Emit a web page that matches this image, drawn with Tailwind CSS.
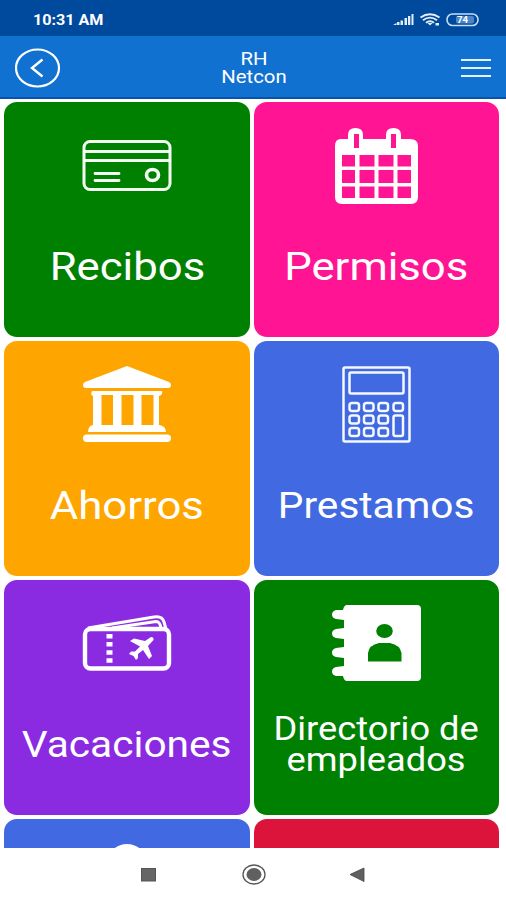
<!DOCTYPE html>
<html lang="es">
<head>
<meta charset="utf-8">
<meta name="viewport" content="width=device-width">
<title>RH Netcon</title>
<script src="https://cdn.jsdelivr.net/npm/@tailwindcss/browser@4"></script>
</head>
<body class="w-[506px] h-[900px] overflow-hidden bg-white font-['Roboto',sans-serif] text-white flex flex-col">
<!-- Status bar -->
<div class="h-9 shrink-0 bg-[#004a9e] flex items-center justify-between pl-[33px] pr-[26px] pt-1">
  <span class="text-[14px] leading-4 font-bold origin-left scale-x-[1.15] whitespace-nowrap">10:31 AM</span>
  <svg class="w-[88px] h-4 shrink-0" viewBox="0 0 88 16" fill="none">
    <g fill="#e3edf8"><path d="M1 13l3.500-2v2zM5 10h2.500v3H5zM8.500 8.500h2.500V13H8.500zM12.500 6h2.500v7h-2.500zM16 4h2.300v9H16zM19.500 2h2v11h-2z"/></g>
    <g stroke="#e3edf8" stroke-width="1.900"><path d="M28.500 5.500Q38-1 47.500 5.500M31 8.200Q38 3 45 8.200M34 10.800Q38 7.500 42 10.800"/></g>
    <path d="M35.500 11L38 13.500L40.500 11zM43.500 11h3.500v2.500h-3.500z" fill="#e3edf8"/>
    <rect x="55" y="2" width="31" height="11.500" rx="5.500" stroke="#c6dcf5" stroke-width="1.600"/>
    <rect x="64" y="4" width="18" height="7.500" rx="2" fill="#4c86c8"/>
    <text x="65" y="11" font-size="9" font-weight="700" fill="#fff" textLength="11" lengthAdjust="spacingAndGlyphs">74</text>
  </svg>
</div>
<!-- App header -->
<header class="h-[63px] shrink-0 bg-[#1171d0] border-b-2 border-[#0754ae] grid grid-cols-[1fr_auto_1fr] items-center pl-[15px] pr-[14px]">
  <svg class="w-[46px] h-10 mt-0.5" viewBox="0 0 46 40" fill="none" stroke="#fff">
    <ellipse cx="22.500" cy="20" rx="21.500" ry="18.500" stroke-width="2.200"/>
    <path d="M27.500 11.500L17 20L27.500 28.500" stroke-width="2.400"/>
  </svg>
  <div class="text-center text-[18px] leading-[18px] scale-x-[1.13] pt-0.5">RH<br>Netcon</div>
  <svg class="w-[32px] h-6 justify-self-end mt-0.5" viewBox="0 0 32 24" stroke="#e8f2fc" stroke-width="2.200"><path d="M1 4h30M1 12h30M1 20h30"/></svg>
</header>
<!-- Menu tiles -->
<main class="h-[749px] shrink-0 overflow-hidden grid grid-cols-[246px_245px] auto-rows-[235px] gap-x-1 gap-y-1 pl-1 pt-[3px]">
  <section class="rounded-[13px] bg-[#008000] flex flex-col items-center">
    <svg class="w-[92px] h-[80px] mt-6 mr-0.5 shrink-0" viewBox="0 0 92 80" fill="none" stroke="#f4fff4" stroke-width="3">
      <rect x="4" y="15.500" width="86" height="48" rx="6"/>
      <path d="M4 25.500h86M4 34.500h86"/>
      <path d="M15 47.500h24M15 54.500h24" stroke-linecap="round" stroke-width="2.800"/>
      <ellipse cx="72.500" cy="49" rx="6" ry="5.500" stroke-width="3.600"/>
    </svg>
    <h2 class="text-[39px] leading-[46px] mt-[38px] scale-x-[1.120] whitespace-nowrap">Recibos</h2>
  </section>
  <section class="rounded-[13px] bg-[#ff1493] flex flex-col items-center">
    <svg class="w-[92px] h-[80px] mt-6 shrink-0" viewBox="0 0 92 80">
      <path fill="#fff" fill-rule="evenodd" d="M10 13H17V9Q17 2 24.500 2Q32 2 32 9V13H55V9Q55 2 62.500 2Q70 2 70 9V13H79Q87 13 87 20V71Q87 78 80 78H11Q4 78 4 71V20Q4 13 10 13ZM23 8V22H28V8ZM60 8V22H65V8ZM11 29V40.500H24V29ZM28.500 29V40.500H43.500V29ZM47.500 29V40.500H62.500V29ZM66.500 29V40.500H80V29ZM11 44V57H24V44ZM28.500 44V57H43.500V44ZM47.500 44V57H62.500V44ZM66.500 44V57H80V44ZM11 60.500V72H24V60.500ZM28.500 60.500V72H43.500V60.500ZM47.500 60.500V72H62.500V60.500ZM66.500 60.500V72H80V60.500Z"/>
    </svg>
    <h2 class="text-[39px] leading-[46px] mt-[38px] scale-x-[1.120] whitespace-nowrap">Permisos</h2>
  </section>
  <section class="rounded-[13px] bg-[#ffa500] flex flex-col items-center">
    <svg class="w-[92px] h-[80px] mt-6 mr-0.5 shrink-0" viewBox="0 0 92 80" fill="#fff">
      <path d="M47 1L89 17Q91 18 91 20Q91 23 88 23H6Q3 23 3 20Q3 18 5 17ZM12 26H82Q83 30 79 31V60Q86 61 86 67H8Q8 61 13 60V31Q10 30 12 26ZM21.500 30V60H33V30ZM41.500 30V60H53.500V30ZM61.500 30V60H73.500V30Z" fill-rule="evenodd"/>
      <rect x="3" y="69.500" width="88" height="7.500" rx="3.700"/>
    </svg>
    <h2 class="text-[39px] leading-[46px] mt-[38px] scale-x-[1.120] whitespace-nowrap">Ahorros</h2>
  </section>
  <section class="rounded-[13px] bg-[#4169e1] flex flex-col items-center">
    <svg class="w-[92px] h-[80px] mt-6 shrink-0" viewBox="0 0 92 80" fill="none" stroke="#f4f8ff" stroke-width="2.500">
      <rect x="12.500" y="2.500" width="66" height="74" rx="1.500"/>
      <rect x="18.500" y="7.500" width="54" height="21" rx="1.500"/>
      <rect x="18.500" y="38" width="9.500" height="8" rx="2.500"/><rect x="33" y="38" width="9.500" height="8" rx="2.500"/><rect x="47.500" y="38" width="9.500" height="8" rx="2.500"/><rect x="62.500" y="38" width="9.500" height="8" rx="2.500"/>
      <rect x="18.500" y="50.500" width="9.500" height="8" rx="2.500"/><rect x="33" y="50.500" width="9.500" height="8" rx="2.500"/><rect x="47.500" y="50.500" width="9.500" height="8" rx="2.500"/><rect x="62.500" y="50.500" width="9.500" height="20.500" rx="2"/>
      <rect x="18.500" y="63" width="9.500" height="8" rx="2.500"/><rect x="33" y="63" width="9.500" height="8" rx="2.500"/><rect x="47.500" y="63" width="9.500" height="8" rx="2.500"/>
    </svg>
    <h2 class="text-[36px] leading-[46px] mt-[38px] scale-x-[1.128] whitespace-nowrap">Prestamos</h2>
  </section>
  <section class="rounded-[13px] bg-[#8a2be2] flex flex-col items-center">
    <svg class="w-[92px] h-[80px] mt-6 mr-0.5 shrink-0" viewBox="0 0 92 80" fill="none" stroke="#fff">
      <rect x="5" y="25" width="84" height="39.500" rx="5.500" stroke-width="4.400"/>
      <path d="M8 24L74 13Q82 11.500 84 18L86 25M32 24L76 17.500Q80 17.500 81 24" stroke-width="3"/>
      <path d="M29.500 30V59" stroke-width="6" stroke-dasharray="4.500 3.600"/>
      <path d="M50 37L54 34.500L65 37L71 33Q74 33 73.500 36L68 42L72 52L69 55L63 46L58 50V54L56 56L53.500 52L49 50L51 47.500H55L60 42.500Z" fill="#fff" stroke="none"/>
    </svg>
    <h2 class="text-[36.300px] leading-[46px] mt-[38px] scale-x-[1.120] whitespace-nowrap">Vacaciones</h2>
  </section>
  <section class="rounded-[13px] bg-[#008000] flex flex-col items-center">
    <svg class="w-[92px] h-[80px] mt-6 mr-0.5 shrink-0" viewBox="0 0 92 80">
      <path fill="#fff" d="M17 1H87Q91 1 91 5V73Q91 77 87 77H17Q14 77 13 72H6Q2 71 2 67.500Q2 64 6 63L14 62V54L6 53Q2 52 2 48.500Q2 45 6 44L14 43V35L6 34Q2 33 2 29.500Q2 26 6 25L14 24V16L6 15Q2 14 2 10.500Q2 7 6 6H13Q14 1 17 1Z"/>
      <ellipse cx="54.500" cy="27" rx="8.300" ry="7" fill="#008000"/>
      <path d="M38 57.500V49Q39 41 49 39H60Q70 41 71.500 49V57.500Z" fill="#008000"/>
    </svg>
    <h2 class="text-[32.500px] leading-[31px] mt-[30px] scale-x-[1.115] text-center whitespace-nowrap">Directorio de<br>empleados</h2>
  </section>
  <section class="rounded-[13px] bg-[#4169e1] flex flex-col items-center">
    <svg class="w-[92px] h-[80px] mt-6 shrink-0" viewBox="0 0 92 80"><ellipse cx="46" cy="16" rx="18" ry="15" fill="#fff"/></svg>
  </section>
  <section class="rounded-[13px] bg-[#dc143c]"></section>
</main>
<!-- System navigation -->
<nav class="flex-1 bg-white">
  <svg class="w-full h-[52px]" viewBox="0 0 506 52">
    <rect x="141.500" y="20.500" width="14" height="12.500" fill="#666" stroke="#555"/>
    <ellipse cx="254" cy="26.500" rx="11" ry="9.500" fill="#fff" stroke="#555" stroke-width="1.300"/>
    <ellipse cx="254" cy="26.500" rx="7.500" ry="6.500" fill="#606060"/>
    <path d="M350 26.500L364 20V33.500Z" fill="#606060" stroke="#444" stroke-width=".8"/>
  </svg>
</nav>
</body>
</html>
